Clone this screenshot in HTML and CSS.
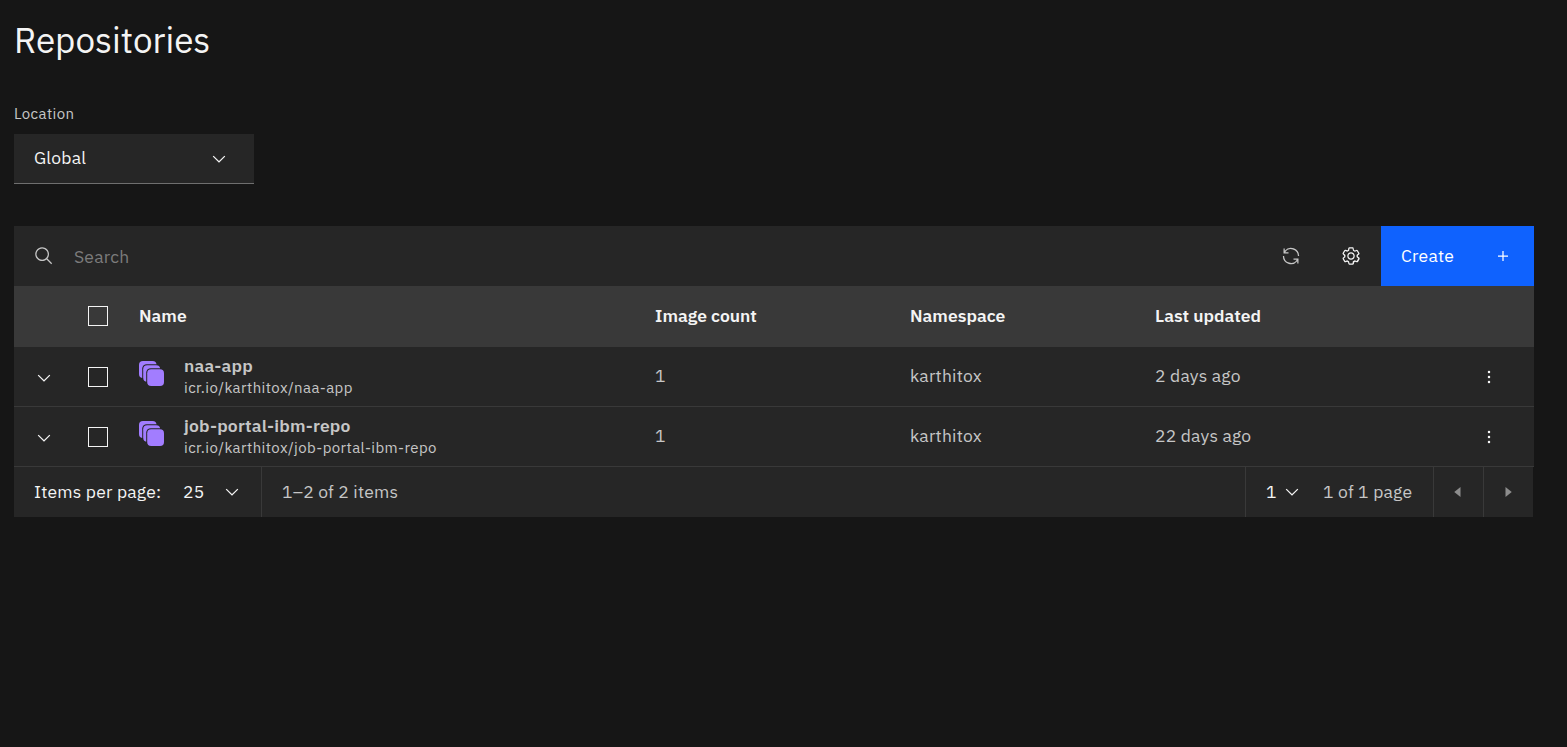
FILE: index.html
```html
<!DOCTYPE html>
<html lang="en">
<head>
<meta charset="utf-8">
<title>Repositories</title>
<link rel="stylesheet" href="styles.css">
</head>
<body>
<svg class="sprite" aria-hidden="true">
  <symbol id="chevron" viewBox="0 0 16 16"><path d="M8 11L3 6l.7-.7L8 9.6l4.3-4.3L13 6z"/></symbol>
  <symbol id="search" viewBox="0 0 32 32"><path d="M29 27.586l-7.552-7.552a11.018 11.018 0 1 0-1.414 1.414L27.586 29ZM4 13a9 9 0 1 1 9 9 9.01 9.01 0 0 1-9-9Z"/></symbol>
  <symbol id="renew" viewBox="0 0 32 32"><path d="M12 10H6.78A11 11 0 0 1 27 16h2A13 13 0 0 0 6 7.68V4H4v8h8ZM20 22h5.22A11 11 0 0 1 5 16H3a13 13 0 0 0 23 8.32V28h2V20H20Z"/></symbol>
  <symbol id="settings" viewBox="0 0 16 16"><path fill-rule="evenodd" d="M13.5,8.4c0-0.1,0-0.3,0-0.4c0-0.1,0-0.3,0-0.4l1-0.8c0.4-0.3,0.4-0.9,0.2-1.3l-1.2-2C13.3,3.2,13,3,12.6,3c-0.1,0-0.2,0-0.3,0.1l-1.2,0.4c-0.2-0.1-0.4-0.3-0.7-0.4l-0.3-1.3C10.1,1.3,9.7,1,9.2,1H6.8c-0.5,0-0.9,0.3-1,0.8L5.6,3.1C5.3,3.2,5.1,3.3,4.9,3.4L3.7,3C3.6,3,3.5,3,3.4,3C3,3,2.7,3.2,2.5,3.5l-1.2,2C1.1,5.9,1.2,6.4,1.6,6.8l0.9,0.9c0,0.1,0,0.3,0,0.4c0,0.1,0,0.3,0,0.4L1.6,9.2c-0.4,0.3-0.5,0.9-0.2,1.3l1.2,2C2.7,12.8,3,13,3.4,13c0.1,0,0.2,0,0.3-0.1l1.2-0.4c0.2,0.1,0.4,0.3,0.7,0.4l0.3,1.3c0.1,0.5,0.5,0.8,1,0.8h2.4c0.5,0,0.9-0.3,1-0.8l0.3-1.3c0.2-0.1,0.4-0.2,0.7-0.4l1.2,0.4c0.1,0,0.2,0.1,0.3,0.1c0.4,0,0.7-0.2,0.9-0.5l1.1-2c0.2-0.4,0.2-0.9-0.2-1.3L13.5,8.4z M12.6,12l-1.7-0.6c-0.4,0.3-0.9,0.6-1.4,0.8L9.2,14H6.8l-0.4-1.8c-0.5-0.2-0.9-0.5-1.4-0.8L3.4,12l-1.2-2l1.4-1.2c-0.1-0.5-0.1-1.1,0-1.6L2.2,6l1.2-2l1.7,0.6C5.5,4.2,6,4,6.5,3.8L6.8,2h2.4l0.4,1.8c0.5,0.2,0.9,0.5,1.4,0.8L12.6,4l1.2,2l-1.4,1.2c0.1,0.5,0.1,1.1,0,1.6l1.4,1.2L12.6,12z M8,11c-1.7,0-3-1.3-3-3s1.3-3,3-3s3,1.3,3,3C11,9.6,9.7,11,8,11z M8,6C6.9,6,6,6.9,6,8s0.9,2,2,2s2-0.9,2-2S9.1,6,8,6z"/></symbol>
  <symbol id="add" viewBox="0 0 32 32"><path d="M17 15V8h-2v7H8v2h7v7h2v-7h7v-2z"/></symbol>
  <symbol id="overflow" viewBox="0 0 32 32"><circle cx="16" cy="8" r="2"/><circle cx="16" cy="16" r="2"/><circle cx="16" cy="24" r="2"/></symbol>
  <symbol id="caret-left" viewBox="0 0 32 32"><path d="M20 24L10 16 20 8z"/></symbol>
  <symbol id="caret-right" viewBox="0 0 32 32"><path d="M12 8L22 16 12 24z"/></symbol>
  <symbol id="stack" viewBox="0 0 25 25"><rect x="0" y="0" width="17.5" height="17" rx="4"/><rect class="cut" x="3.2" y="3.2" width="18" height="18" rx="4.5"/><rect x="4.2" y="4.2" width="17" height="16.5" rx="4"/><rect class="cut" x="7.2" y="7.2" width="17.8" height="17.8" rx="4.5"/><rect x="8.2" y="8.2" width="16.8" height="16.8" rx="4"/></symbol>
</svg>
<main class="page">
  <h1 class="title">Repositories</h1>
  <div class="label">Location</div>
  <div class="dropdown"><span class="value">Global</span><svg class="icon"><use href="#chevron"/></svg></div>

  <section class="table">
    <div class="toolbar">
      <svg class="icon dim"><use href="#search"/></svg>
      <span class="search">Search</span>
      <svg class="icon dim"><use href="#renew"/></svg>
      <svg class="icon gear"><use href="#settings"/></svg>
      <button class="create"><span>Create</span><svg class="icon"><use href="#add"/></svg></button>
    </div>
    <div class="row head">
      <span></span><span class="box"></span><span>Name</span><span>Image count</span><span>Namespace</span><span>Last updated</span><span></span>
    </div>
    <div class="row">
      <svg class="icon expand"><use href="#chevron"/></svg><span class="box"></span>
      <div class="repo"><svg class="stack"><use href="#stack"/></svg><div><div class="repo-name">naa-app</div><div class="repo-url">icr.io/karthitox/naa-app</div></div></div>
      <span class="cell">1</span><span class="cell">karthitox</span><span class="cell">2 days ago</span><svg class="icon"><use href="#overflow"/></svg>
    </div>
    <div class="row">
      <svg class="icon expand"><use href="#chevron"/></svg><span class="box"></span>
      <div class="repo"><svg class="stack"><use href="#stack"/></svg><div><div class="repo-name">job-portal-ibm-repo</div><div class="repo-url">icr.io/karthitox/job-portal-ibm-repo</div></div></div>
      <span class="cell">1</span><span class="cell">karthitox</span><span class="cell">22 days ago</span><svg class="icon"><use href="#overflow"/></svg>
    </div>
    <div class="pagination">
      <div class="per-page"><span>Items per page:</span><span class="p-size">25</span><svg class="icon"><use href="#chevron"/></svg></div>
      <div class="range">1–2 of 2 items</div>
      <div class="page-select"><span class="p-num">1</span><svg class="icon"><use href="#chevron"/></svg><span class="p-pages">1 of 1 page</span></div>
      <div class="nav"><svg class="icon"><use href="#caret-left"/></svg></div>
      <div class="nav"><svg class="icon"><use href="#caret-right"/></svg></div>
    </div>
  </section>
</main>
</body>
</html>
```
FILE: styles.css
```css
* { box-sizing: border-box; }
body {
  margin: 0;
  background: #161616;
  color: #f4f4f4;
  font: 17.5px/22px "IBM Plex Sans", Roboto, "Liberation Sans", sans-serif;
  letter-spacing: 0.2px;
}
.sprite { display: none; }
.icon { display: block; width: 20px; height: 20px; fill: currentColor; flex: none; }
.page { width: 1534px; padding: 18px 0 0 14px; }
.title { margin: 0; font-size: 35px; line-height: 44px; font-weight: 400; letter-spacing: 0; }
.label { margin-top: 42px; height: 30px; font-size: 15px; line-height: 20px; letter-spacing: 0.4px; color: #c6c6c6; }
.dropdown {
  display: flex; align-items: center; justify-content: space-between;
  width: 240px; height: 50px; padding: 0 25px 2px 20px;
  background: #262626; border-bottom: 1px solid #6f6f6f;
}
.dropdown .icon { margin-top: 2px; }
.table { margin-top: 42px; }
.toolbar { display: flex; align-items: center; height: 60px; padding-left: 20px; background: #262626; }
.dim { color: #c6c6c6; }
.search { flex: 1; padding: 2px 0 0 20px; color: #7c7c7c; }
.gear { margin: 0 20px 0 40px; }
.create {
  display: flex; align-items: center; justify-content: space-between;
  width: 153px; height: 60px; padding: 0 21px 0 20px; border: 0;
  background: #0f62fe; color: #fff; font: inherit; letter-spacing: inherit;
}
.row {
  display: grid; align-items: center;
  grid-template-columns: 54px 51px 516px 255px 245px 324px 20px;
  height: 60px; padding-left: 20px;
  background: #262626; border-bottom: 1px solid #393939; color: #c6c6c6;
}
.row .icon { color: #f4f4f4; margin-top: 1px; }
.row .expand { margin-top: 2px; }
.head { height: 61px; background: #393939; color: #f4f4f4; font-weight: 600; letter-spacing: 0; }
.box { width: 20px; height: 20px; border: 1px solid #f4f4f4; margin-top: 1px; }
.head .box { margin-top: 0; margin-bottom: 1px; }
.cell { margin-bottom: 2px; }
.repo { display: flex; gap: 20px; height: 59px; padding-top: 8px; }
.stack { flex: none; width: 25px; height: 25px; margin-top: 6px; fill: #a27dff; }
.cut { fill: #262626; }
.repo-name { font-weight: 600; line-height: 22px; letter-spacing: 0.2px; }
.repo-url { font-size: 15px; line-height: 22px; letter-spacing: 0.4px; }
.pagination { display: flex; width: 1519px; height: 50px; background: #262626; }
.pagination > div { display: flex; align-items: center; }
.per-page { width: 248px; padding: 0 19px 0 20px; border-right: 1px solid #393939; }
.p-size { margin-left: auto; width: 39px; }
.range { flex: 1; padding-left: 20px; color: #c6c6c6; }
.page-select { width: 188px; padding-left: 20px; border-left: 1px solid #393939; }
.p-num { width: 16px; }
.p-pages { margin-left: 21px; color: #c6c6c6; }
.nav { width: 50px; justify-content: center; border-left: 1px solid #393939; color: #8d8d8d; padding-right: 1px; }
```
